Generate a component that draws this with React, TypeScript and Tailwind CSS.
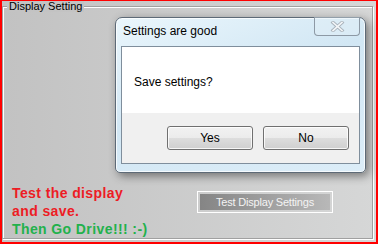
import React from 'react';

const ui = "font-['Liberation_Sans',Arial,sans-serif]";

function WinButton({ label }: { label: string }) {
  return (
    <button className="h-[24px] w-[86px] rounded-[3px] border border-[#707070] bg-[linear-gradient(to_bottom,#f2f2f2_0%,#ebebeb_50%,#dddddd_51%,#cfcfcf_100%)] text-[12px] leading-none text-black shadow-[inset_0_0_0_1px_rgba(255,255,255,0.8)]">
      {label}
    </button>
  );
}

function MessageBox() {
  return (
    <div className="absolute left-[113px] top-[16px] h-[156px] w-[251px] rounded-t-[7px] rounded-b-[5px] border border-[#5d6a77] bg-[linear-gradient(160deg,#eaf6fc_0%,#d2e7f4_45%,#dcedf8_100%)] shadow-[3px_3px_10px_rgba(0,0,0,0.45),inset_0_0_0_1px_rgba(255,255,255,0.75)]">
      <div className="relative h-[28px] pl-[7px] pt-[6px] text-[12px] leading-[14px] text-black">
        Settings are good
        <div className="absolute right-[5px] top-[-1px] flex h-[19px] w-[46px] items-center justify-center rounded-b-[4px] border border-t-0 border-[#8d99a5] bg-[#e4f0f8]/40">
          <svg width="15" height="11" viewBox="0 0 15 11">
            <path d="M3 1.5 L12 9.5 M12 1.5 L3 9.5" stroke="#a9b3bc" strokeWidth="3.4" strokeLinecap="square" />
            <path d="M3 1.5 L12 9.5 M12 1.5 L3 9.5" stroke="#f4f7f9" strokeWidth="1.6" strokeLinecap="square" />
          </svg>
        </div>
      </div>
      <div className="mx-[5px] flex h-[118px] flex-col border border-[#7f8e9c]">
        <div className="h-[66px] bg-white pl-[12px] pt-[28px] text-[12px] leading-[14px] text-black">
          Save settings?
        </div>
        <div className="flex flex-1 justify-end gap-[10px] bg-[#f0f0f0] pr-[10px] pt-[13px]">
          <WinButton label="Yes" />
          <WinButton label="No" />
        </div>
      </div>
    </div>
  );
}

export default function App() {
  return (
    <div
      className={`relative h-[244px] w-[378px] overflow-hidden border-x-2 border-b-2 border-t border-[#ff0000] bg-gradient-to-r from-[#c2c2c2] to-[#d6d7d7] ${ui}`}
    >
      <div className="relative mb-[3px] ml-0 mr-[3px] mt-[5px] h-[233px] border border-[#a0a0a0] shadow-[1px_1px_0_#fff,inset_1px_1px_0_#fff]">
        <span className="absolute left-[4px] top-[-7px] bg-[#c3c3c3] px-[2px] text-[11px] leading-[12px] text-black">
          Display Setting
        </span>

        <div className="flex pl-[9px] pt-[177px]">
          <div className="w-[185px] shrink-0 text-[14px] font-bold leading-[18px] tracking-[0.4px]">
            <div className="text-[#ed1c24]">Test the display</div>
            <div className="text-[#ed1c24]">and save.</div>
            <div className="text-[#22b14c]">Then Go Drive!!! :-)</div>
          </div>
          <div className="mt-[7px] h-[22px] w-[136px] shrink-0 border border-white p-[2px]">
            <div className="flex h-full items-center justify-center bg-gradient-to-r from-[#858585] to-[#b8b8b8] text-[11px] tracking-[-0.2px] text-[#f4f4f4]">
              Test Display Settings
            </div>
          </div>
        </div>
      </div>

      <MessageBox />
    </div>
  );
}
